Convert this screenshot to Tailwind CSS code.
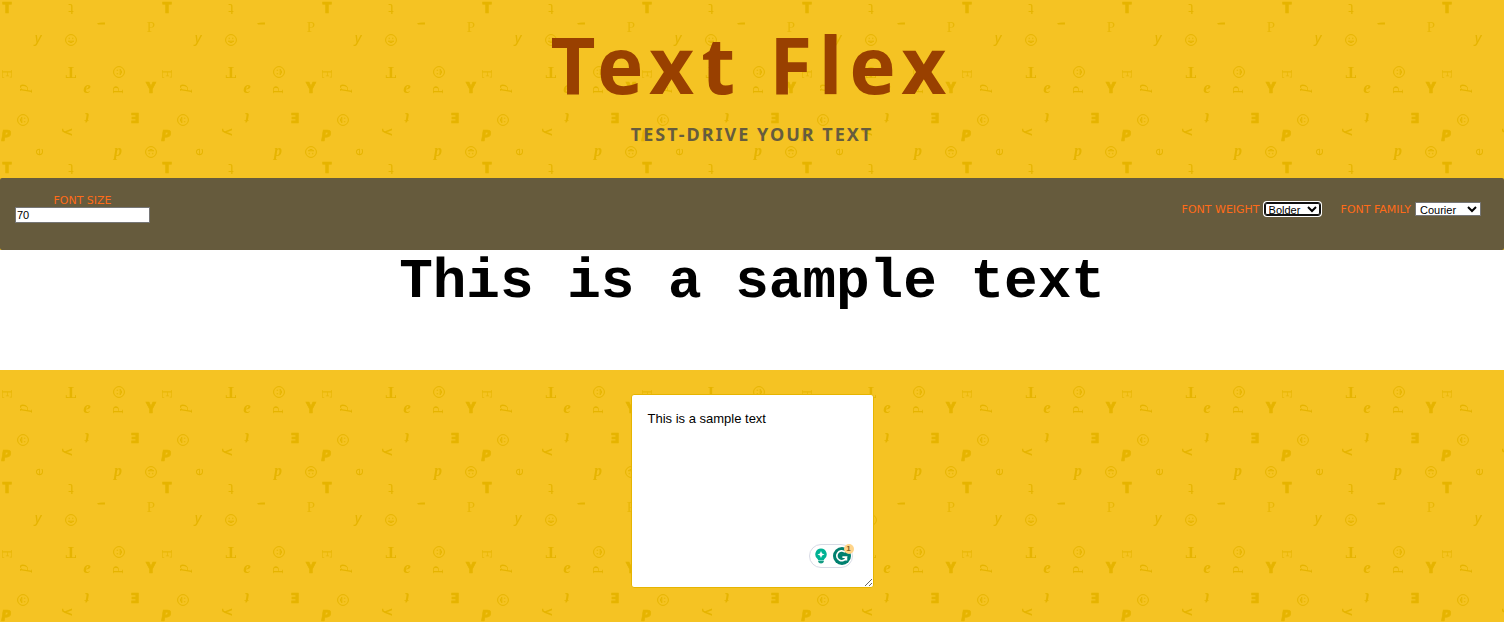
<!DOCTYPE html>
<html lang="en">
<head>
<meta charset="utf-8">
<meta name="viewport" content="width=device-width, initial-scale=1">
<title>Text Flex</title>
<script src="https://cdn.jsdelivr.net/npm/@tailwindcss/browser@4"></script>
</head>
<body class="relative isolate min-h-screen bg-[#f5c323] font-['Noto_Sans',sans-serif]">

<!-- Repeating letter pattern behind the page -->
<svg class="absolute inset-0 -z-10 h-full w-full" aria-hidden="true">
  <defs>
    <g id="face" fill="none" stroke="#e6b400" stroke-width="1">
      <circle r="5.4"/>
      <path d="M-2.8 1.2Q0 4.2 2.8 1.2M-2.8 1.2H2.8M-1.8-2.4V-.8M1.8-2.4V-.8"/>
    </g>
    <pattern id="letters" width="160" height="160" patternUnits="userSpaceOnUse">
      <g fill="#e6b400" text-anchor="middle" font-size="14" font-family="'Noto Sans',sans-serif">
        <text x="7" y="13" font-weight="900" font-family="Inter,sans-serif" stroke="#e6b400" stroke-width=".6">T</text>
        <text transform="translate(71 4) rotate(180)" font-size="14" font-family="'DejaVu Sans',sans-serif">t</text>
        <path d="M97 23.2Q101 22 105 22.6V24.6H98Z"/>
        <text x="151" y="32" font-size="15" font-family="'Liberation Serif',serif" opacity=".8">P</text>
        <text x="38" y="43" font-style="italic" font-weight="500">y</text>
        <use href="#face" x="71" y="40"/>
        <text transform="translate(2 74) rotate(90)" font-size="13" font-family="'DejaVu Serif',serif" opacity=".8">E</text>
        <text transform="translate(71 67) rotate(180)" font-size="16" font-family="'Liberation Serif',serif" font-weight="700">T</text>
        <use href="#face" transform="translate(119 72) rotate(-90)"/>
        <text transform="translate(28 88) rotate(-90)" font-size="16" font-style="italic" font-family="'Liberation Serif',serif">p</text>
        <text x="87" y="93" font-size="17" font-style="italic" font-weight="700" font-family="'Liberation Serif',serif">e</text>
        <text transform="translate(123 90) rotate(-90)" font-size="12" font-family="'DejaVu Serif',serif">P</text>
        <text x="151" y="93" font-weight="900" font-family="Inter,sans-serif" stroke="#e6b400" stroke-width=".6">Y</text>
        <text transform="translate(87 113) rotate(180)" font-size="16" font-style="italic" font-weight="700" font-family="'Liberation Serif',serif">t</text>
        <text transform="translate(135 113) rotate(180)" font-size="13" font-weight="900" font-family="Inter,sans-serif" stroke="#e6b400" stroke-width=".6">E</text>
        <use href="#face" transform="translate(23 120) rotate(90)"/>
        <text transform="translate(65 132) rotate(90)" font-size="13" font-weight="600">y</text>
        <text x="6" y="141" font-weight="900" font-style="italic" font-family="Inter,sans-serif" stroke="#e6b400" stroke-width=".6">P</text>
        <text transform="translate(43 152) rotate(-90)" font-size="13" font-family="'DejaVu Sans',sans-serif">e</text>
        <text x="118" y="156" font-size="16" font-style="italic" font-weight="700" font-family="'Liberation Serif',serif">p</text>
        <use href="#face" transform="translate(151 152) rotate(180)"/>
      </g>
    </pattern>
  </defs>
  <rect width="100%" height="100%" fill="url(#letters)"/>
</svg>

<header class="flex h-[178px] flex-col items-center pt-6 text-center">
  <h1 class="text-[78px] leading-20 font-bold tracking-[7px] text-[#994000]">Text Flex</h1>
  <h2 class="mt-4 text-lg leading-7 font-bold tracking-[2px] text-[#665c3e] uppercase">Test-drive your text</h2>
</header>

<main>
  <form class="flex h-18 items-start justify-between rounded-xs bg-[#665b3d] px-[15px] pt-4 font-['DejaVu_Sans',sans-serif] text-[11px] leading-[13px] text-[#ff6b18]">
    <div class="flex w-[135px] flex-col items-center">
      <label for="size">FONT SIZE</label>
      <input id="size" type="text" value="70" class="h-4 w-full border border-[#767676] bg-white px-px font-['Liberation_Sans',sans-serif] text-[11px] text-black">
    </div>
    <div class="flex items-center gap-5 pt-2 pr-2">
      <div class="flex items-center gap-1">
        <label for="weight">FONT WEIGHT</label>
        <select id="weight" class="h-[14px] w-[57px] rounded-[3px] border border-[#101010] bg-white font-['Liberation_Sans',sans-serif] text-[11px] leading-none text-black inset-ring inset-ring-[#101010] ring-1 ring-white">
          <option>Normal</option><option>Bold</option><option selected>Bolder</option>
        </select>
      </div>
      <div class="flex items-center gap-1">
        <label for="family">FONT FAMILY</label>
        <select id="family" class="h-[14px] w-[66px] border border-[#767676] bg-white font-['Liberation_Sans',sans-serif] text-[11px] leading-none text-black">
          <option selected>Courier</option><option>Arial</option><option>Verdana</option>
        </select>
      </div>
    </div>
  </form>

  <output for="source" class="block min-h-30 bg-white text-center font-['Courier_New','Liberation_Mono',monospace] text-[56px] leading-16 font-bold text-black">This is a sample text</output>

  <div class="flex justify-center pt-6">
    <div class="relative">
      <textarea id="source" aria-label="Your text" class="block h-[194px] w-[243px] rounded-[3px] border border-[#e6b400] bg-white p-4 font-['Liberation_Sans',sans-serif] text-[13px] leading-4 text-black">This is a sample text</textarea>
      <div class="absolute right-[21px] bottom-5 flex h-6 w-11 items-center gap-[6px] rounded-full border border-[#d8dae5] bg-white pl-[5px]">
        <svg class="h-4 w-3 shrink-0" viewBox="0 0 12 16" aria-hidden="true">
          <path d="M6 .6A5.8 5.8 0 0 0 2.6 11L3.4 12.4H8.6L9.4 11A5.8 5.8 0 0 0 6 .6Z" fill="#00b294"/>
          <path d="M6 3L7.1 5.4L9.5 6.5L7.1 7.6L6 10L4.9 7.6L2.5 6.5L4.9 5.4Z" fill="#fff"/>
          <path d="M3.2 13H8.8V13.8Q8.5 15.4 6 15.4Q3.5 15.4 3.2 13.8Z" fill="#149b83"/>
        </svg>
        <svg class="h-[18px] w-[18px] shrink-0" viewBox="0 0 18 18" aria-hidden="true">
          <circle cx="9" cy="9" r="9" fill="#00806f"/>
          <path d="M12 5.2A4.9 4.9 0 1 0 13.4 10.2H9.4M13.4 9.4V13.4" fill="none" stroke="#fff" stroke-width="1.7"/>
        </svg>
        <span class="absolute -top-px -right-0.5 flex size-[10px] items-center justify-center rounded-full bg-[#ffd58a] font-['Liberation_Sans',sans-serif] text-[8px] leading-none font-bold text-[#8a5a1c]">1</span>
      </div>
    </div>
  </div>
</main>
</body>
</html>
